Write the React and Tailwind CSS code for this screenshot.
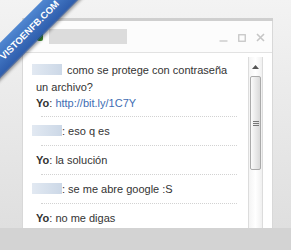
import React from 'react';

const messages = [
  { friend: true, text: ': eso q es' },
  { friend: false, text: 'la solución' },
  { friend: true, text: ': se me abre google :S' },
  { friend: false, text: 'no me digas' },
];

function NameBlur({ className = '' }) {
  return <span className={`inline-block w-[30px] h-[11px] -ml-[4px] align-[-1px] bg-gradient-to-r from-[#e2e9f2] to-[#ccd8e7] ${className}`}></span>;
}

function Dots() {
  return <div className="ml-[5px] border-t border-dotted border-[#d2d2d2]"></div>;
}

export default function App() {
  return (
    <div className="relative w-[291px] h-[250px] overflow-hidden flex flex-col" style={{ fontFamily: '"Liberation Sans", Arial, sans-serif' }}>
      {/* page behind the chat */}
      <div className="h-[228px] shrink-0 bg-gradient-to-b from-[#f3f3f3] to-[#dfdfdf] pl-[22px] pt-[18px]">
        <div className="w-[251px] h-[210px] flex flex-col bg-white border-l border-r border-[#d8d8d8]">
          {/* title bar */}
          <div className="h-[3px] bg-[#cfcfcf] -mr-[1px]"></div>
          <div className="h-[32px] flex items-center border-b border-[#e2e2e2] bg-[#fcfcfc]">
            <span className="ml-[14px] w-[6px] h-[8px] rounded-[2px] bg-[#3f8a30]"></span>
            <span className="ml-[6px] w-[78px] h-[15px] bg-[#dcdcdc]"></span>
            <div className="ml-auto mr-[7px] mt-[2px] flex items-center gap-[10px]">
              <svg width="9" height="9" viewBox="0 0 9 9"><path d="M0.5 8h8" stroke="#c6c6c6" strokeWidth="1.3" /></svg>
              <svg width="8" height="8" viewBox="0 0 8 8"><rect x="0.75" y="0.75" width="6.5" height="6.5" fill="none" stroke="#c6c6c6" strokeWidth="1.3" /></svg>
              <svg width="9" height="9" viewBox="0 0 9 9"><path d="M1 1l7 7M8 1l-7 7" stroke="#c6c6c6" strokeWidth="1.6" /></svg>
            </div>
          </div>

          {/* body */}
          <div className="flex-1 flex min-h-0">
            <div className="flex-1 pl-[13px] pr-[11px] text-[11px] text-[#333]">
              <div className="pt-[9px] pb-[4px] leading-[16.5px]">
                <div><NameBlur className="mr-[5px]" />como se protege con contraseña un archivo?</div>
                <div><span className="font-bold">Yo</span>: <span className="text-[#3e6db3]">http://bit.ly/1C7Y</span></div>
              </div>
              <Dots />
              {messages.map((m, i) => (
                <div key={i}>
                  <div className="pt-[6px] pb-[6px] leading-[16px] whitespace-nowrap">
                    {m.friend ? (
                      <><NameBlur />{m.text}</>
                    ) : (
                      <><span className="font-bold">Yo</span>: {m.text}</>
                    )}
                  </div>
                  {i < messages.length - 1 && <Dots />}
                </div>
              ))}
            </div>

            {/* scrollbar */}
            <div className="w-[15px] mt-[4px] flex flex-col border-l border-r border-[#dcdcdc] bg-gradient-to-r from-[#f4f4f4] via-white to-[#f0f0f0]">
              <div className="h-[19px] flex items-center justify-center">
                <svg width="7" height="4" viewBox="0 0 7 4"><path d="M0 4L3.5 0L7 4z" fill="#555" /></svg>
              </div>
              <div className="h-[94px] mx-[1px] rounded-[2px] border border-[#aaaaaa] bg-gradient-to-r from-[#fbfbfb] to-[#d9d9d9] flex flex-col items-center justify-center gap-[1px]">
                <div className="w-[6px] h-[1px] bg-[#777]"></div>
                <div className="w-[6px] h-[1px] bg-[#777]"></div>
                <div className="w-[6px] h-[1px] bg-[#777]"></div>
              </div>
            </div>
            <div className="w-[9px]"></div>
          </div>
        </div>
      </div>
      <div className="flex-1 bg-[#d3d3d3]"></div>

      {/* corner ribbon */}
      <div className="absolute left-[-35px] top-[18px] w-[130px] h-[25px] -rotate-45 flex items-center justify-center bg-gradient-to-b from-[#5087d1] to-[#2e5dac] border-b border-[#23488a] shadow-[0_2px_3px_rgba(0,0,0,0.35)]">
        <span className="text-white text-[9.5px] font-bold leading-none">VISTOENFB.COM</span>
      </div>
    </div>
  );
}
